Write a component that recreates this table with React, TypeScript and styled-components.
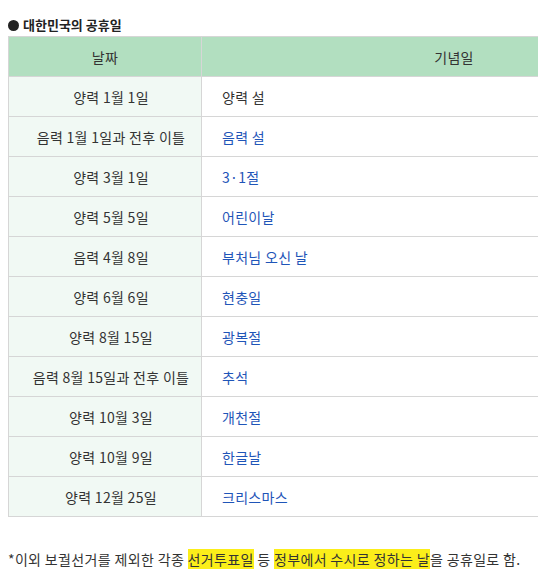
import React from "react";
import styled, { createGlobalStyle } from "styled-components";

const Global = createGlobalStyle`
  html, body { margin: 0; padding: 0; background: #fff; overflow: hidden; }
  body {
    font-family: "Noto Sans CJK KR", "Noto Sans", sans-serif;
    color: #333;
    font-size: 14px;
  }
`;

const Page = styled.div`
  padding: 14px 0 0 8px;
  box-sizing: border-box;
  width: 538px;
  overflow: hidden;
`;

const Title = styled.div`
  font-size: 13px;
  font-weight: 700;
  color: #222;
  height: 22px;
  line-height: 22px;
  display: flex;
  align-items: center;
  gap: 4px;
`;

const Dot = styled.span`
  display: inline-block;
  width: 11px;
  height: 11px;
  border-radius: 50%;
  background: #222;
`;

const TableWrap = styled.div`
  width: 530px;
  overflow: hidden;
`;

const Table = styled.table`
  border-collapse: collapse;
  width: 699px;
  table-layout: fixed;
`;

const Th = styled.th<{ $w?: number }>`
  background: #b2dfc0;
  border: 1px solid #d6d6d6;
  height: 39px;
  padding: 0;
  font-weight: 400;
  font-size: 14px;
  letter-spacing: 0.3px;
  color: #333;
  text-align: center;
  ${(p) => (p.$w ? `width: ${p.$w}px;` : "")}
`;

const DateCell = styled.td`
  background: #f1f9f4;
  border: 1px solid #d6d6d6;
  height: 39px;
  padding: 0 0 0 12px;
  text-align: center;
  font-size: 14px;
  letter-spacing: 0.3px;
  color: #333;
`;

const NameCell = styled.td`
  border: 1px solid #d6d6d6;
  height: 39px;
  padding: 0 0 0 20px;
  font-size: 14px;
  letter-spacing: 0.3px;
  color: #333;
`;

const Link = styled.span`
  color: #1f55b8;
`;

const Note = styled.p`
  margin: 32px 0 0 0;
  font-size: 14px;
  letter-spacing: 0.35px;
  color: #333;
  line-height: 20px;
  white-space: nowrap;
`;

const Mark = styled.span`
  background: #fbee1a;
`;

const rows: [string, string, boolean][] = [
  ["양력 1월 1일", "양력 설", false],
  ["음력 1월 1일과 전후 이틀", "음력 설", true],
  ["양력 3월 1일", "3·1절", true],
  ["양력 5월 5일", "어린이날", true],
  ["음력 4월 8일", "부처님 오신 날", true],
  ["양력 6월 6일", "현충일", true],
  ["양력 8월 15일", "광복절", true],
  ["음력 8월 15일과 전후 이틀", "추석", true],
  ["양력 10월 3일", "개천절", true],
  ["양력 10월 9일", "한글날", true],
  ["양력 12월 25일", "크리스마스", true],
];

export default function App() {
  return (
    <>
      <Global />
      <Page>
        <Title>
          <Dot />
          대한민국의 공휴일
        </Title>
        <TableWrap>
          <Table>
            <thead>
              <tr>
                <Th $w={192}>날짜</Th>
                <Th>기념일</Th>
              </tr>
            </thead>
            <tbody>
              {rows.map(([d, n, l]) => (
                <tr key={d + n}>
                  <DateCell>{d}</DateCell>
                  <NameCell>{l ? <Link>{n}</Link> : n}</NameCell>
                </tr>
              ))}
            </tbody>
          </Table>
        </TableWrap>
        <Note>
          *이외 보궐선거를 제외한 각종 <Mark>선거투표일</Mark> 등{" "}
          <Mark>정부에서 수시로 정하는 날</Mark>을 공휴일로 함.
        </Note>
      </Page>
    </>
  );
}
